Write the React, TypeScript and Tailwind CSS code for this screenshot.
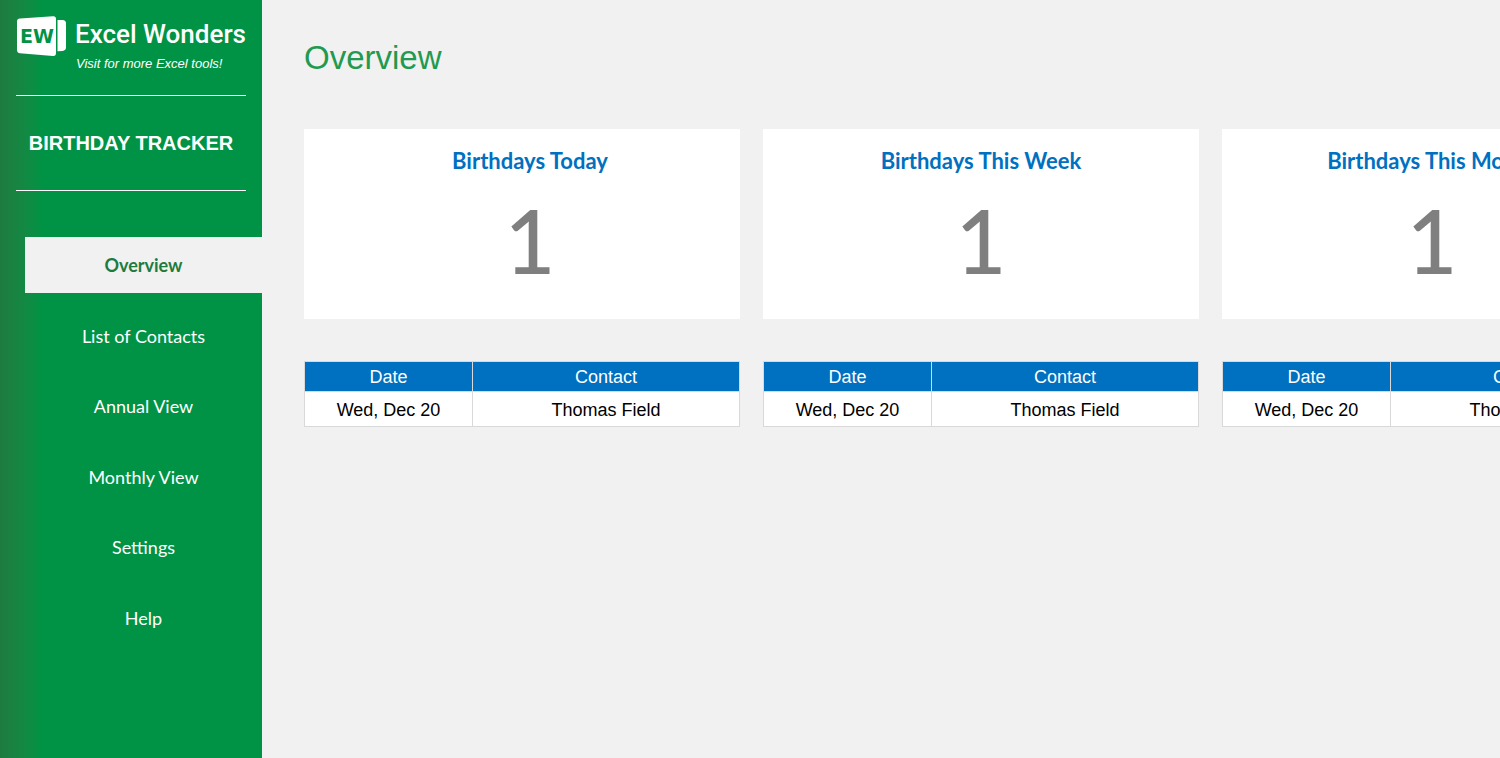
import { useState } from 'react';
import clsx from 'clsx';

const NAV_ITEMS = ['Overview', 'List of Contacts', 'Annual View', 'Monthly View', 'Settings', 'Help'];

interface Birthday {
  date: string;
  contact: string;
}

interface Period {
  title: string;
  birthdays: Birthday[];
}

const PERIODS: Period[] = [
  { title: 'Birthdays Today', birthdays: [{ date: 'Wed, Dec 20', contact: 'Thomas Field' }] },
  { title: 'Birthdays This Week', birthdays: [{ date: 'Wed, Dec 20', contact: 'Thomas Field' }] },
  { title: 'Birthdays This Month', birthdays: [{ date: 'Wed, Dec 20', contact: 'Thomas Field' }] },
];

function LogoMark() {
  return (
    <svg width="51" height="42" viewBox="-1 0 51 42" aria-hidden="true" className="shrink-0">
      <path d="M3 2.6 36 .2Q39 0 39 3V37Q39 40.200 36 39.900L3 37.200Q0 37 0 34V5.600Q0 2.800 3 2.600Z" fill="#fff" />
      <path d="M40.500 4H45.500Q49 4.300 49 7.500V31.500Q49 34.500 45.500 34.900L40.500 35.300Z" fill="#fff" />
      <text
        x="3"
        y="27"
        fontSize="19"
        fontWeight="700"
        fill="#009345"
        className="font-['DejaVu_Sans']"
      >
        EW
      </text>
    </svg>
  );
}

function Sidebar() {
  const [active, setActive] = useState('Overview');

  return (
    <aside className="w-[262px] shrink-0 bg-linear-to-r from-[#1e7b40] to-[#009345] to-[42px] text-white">
      <div className="mx-4 h-24 border-b border-white pt-4">
        <a href="#home" className="flex h-10 gap-2">
          <LogoMark />
          <span className="whitespace-nowrap font-['Roboto',sans-serif] text-[26px] font-medium leading-9">
            Excel Wonders
          </span>
        </a>
        <a href="#tools" className="block pl-[60px] text-[13px] italic leading-4">
          Visit for more Excel tools!
        </a>
      </div>

      <div className="mx-4 flex h-[95px] items-center justify-center border-b border-white">
        <h2 className="whitespace-nowrap text-xl font-bold leading-6">BIRTHDAY TRACKER</h2>
      </div>

      <nav className="mt-[46px] flex h-[409px] flex-col justify-between pl-[25px] font-['Lato',sans-serif] text-lg">
        {NAV_ITEMS.map((item) => (
          <button
            key={item}
            type="button"
            onClick={() => setActive(item)}
            className={clsx(
              'h-14 cursor-pointer text-center',
              active === item && 'bg-[#f1f1f1] font-bold text-[#1e7b40]'
            )}
          >
            {item}
          </button>
        ))}
      </nav>
    </aside>
  );
}

function SummaryCard({ title, count }: { title: string; count: number }) {
  return (
    <div className="h-[190px] bg-white pt-4 text-center font-['Lato',sans-serif] group-first:pl-4 group-last:pr-4">
      <h3 className="text-[22px] font-bold leading-8 text-[#0070c0]">{title}</h3>
      <p className="pt-[13px] text-[88px] font-medium leading-[100px] text-[#7f7f7f]">{count}</p>
    </div>
  );
}

function BirthdayTable({ birthdays }: { birthdays: Birthday[] }) {
  return (
    <table className="w-full table-fixed border-collapse text-center text-lg leading-6">
      <thead>
        <tr className="h-[30px] bg-[#0070c0] text-white">
          <th className="w-[168px] border border-[#d9d9d9] font-normal">Date</th>
          <th className="border border-[#d9d9d9] font-normal">Contact</th>
        </tr>
      </thead>
      <tbody>
        {birthdays.map((b) => (
          <tr key={b.contact} className="h-[35px] bg-white text-black">
            <td className="border border-[#d9d9d9] pt-0.5">{b.date}</td>
            <td className="border border-[#d9d9d9] pt-0.5">{b.contact}</td>
          </tr>
        ))}
      </tbody>
    </table>
  );
}

export default function App() {
  return (
    <div className="flex min-h-screen overflow-hidden bg-[#f1f1f1] font-['Liberation_Sans',Arial,sans-serif]">
      <Sidebar />

      <main className="min-w-0 flex-1 overflow-hidden pl-[42px] pt-9">
        <h1 className="text-[33px] leading-[44px] text-[#1f9a50]">Overview</h1>

        <div className="mt-[49px] flex gap-[23px]">
          {PERIODS.map((p) => (
            <section key={p.title} className="group flex w-[436px] shrink-0 flex-col gap-[42px]">
              <SummaryCard title={p.title} count={p.birthdays.length} />
              <BirthdayTable birthdays={p.birthdays} />
            </section>
          ))}
        </div>
      </main>
    </div>
  );
}
